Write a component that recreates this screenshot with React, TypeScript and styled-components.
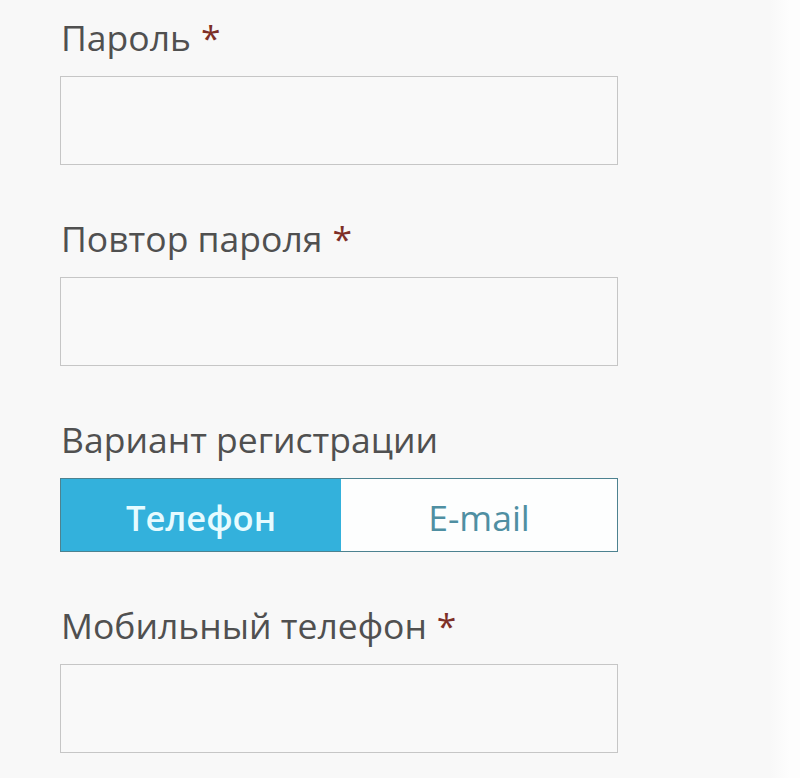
import { FC, useState } from "react";
import styled, { createGlobalStyle } from "styled-components";

const GlobalStyle = createGlobalStyle`
  html, body {
    margin: 0;
    padding: 0;
    background: #f8f8f8;
  }
  body {
    font-family: "Open Sans", "Noto Sans", sans-serif;
  }
`;

const Page = styled.div`
  width: 800px;
  height: 778px;
  box-sizing: border-box;
  padding: 14px 0 0 60px;
  background: linear-gradient(to right, #f8f8f8 0, #f8f8f8 770px, #fdfdfd 790px);
`;

const Form = styled.form`
  width: 558px;
  display: flex;
  flex-direction: column;
`;

const Field = styled.div`
  display: flex;
  flex-direction: column;
  margin-bottom: 50px;
`;

const Label = styled.label`
  font-size: 35.5px;
  line-height: 46px;
  color: #505050;
  margin-bottom: 16px;
  padding-left: 1px;
`;

const Required = styled.span`
  color: #7e2f27;
  margin-left: 10px;
`;

const Input = styled.input`
  box-sizing: border-box;
  width: 100%;
  height: 89px;
  border: 1.5px solid #c6c6c6;
  background: #f9f9f9;
  font-size: 28px;
  padding: 0 16px;
  outline: none;
`;

const Toggle = styled.div`
  display: grid;
  grid-template-columns: 280px 1fr;
  height: 74px;
  box-sizing: border-box;
  border: 1.5px solid #4d8290;
`;

const ToggleButton = styled.button<{ $active?: boolean }>`
  border: none;
  margin: 0;
  font-family: inherit;
  font-size: ${(p) => (p.$active ? "34.5px" : "35.5px")};
  font-weight: ${(p) => (p.$active ? 600 : 400)};
  color: ${(p) => (p.$active ? "#e6fbff" : "#4f8fa2")};
  background: ${(p) => (p.$active ? "#33b1dc" : "#fdfefe")};
  cursor: pointer;
  padding: 4px 0 0;
`;

const fields = [
  { label: "Пароль", type: "password" },
  { label: "Повтор пароля", type: "password" },
];

const App: FC = () => {
  const [mode, setMode] = useState<"phone" | "email">("phone");

  return (
    <Page>
      <GlobalStyle />
      <Form onSubmit={(e) => e.preventDefault()}>
        {fields.map((f) => (
          <Field key={f.label}>
            <Label>
              {f.label}
              <Required>*</Required>
            </Label>
            <Input type={f.type} />
          </Field>
        ))}

        <Field>
          <Label>Вариант регистрации</Label>
          <Toggle>
            <ToggleButton type="button" $active={mode === "phone"} onClick={() => setMode("phone")}>
              Телефон
            </ToggleButton>
            <ToggleButton type="button" $active={mode === "email"} onClick={() => setMode("email")}>
              E-mail
            </ToggleButton>
          </Toggle>
        </Field>

        <Field>
          <Label>
            {mode === "phone" ? "Мобильный телефон" : "E-mail"}
            <Required>*</Required>
          </Label>
          <Input type={mode === "phone" ? "tel" : "email"} />
        </Field>
      </Form>
    </Page>
  );
};

export default App;
